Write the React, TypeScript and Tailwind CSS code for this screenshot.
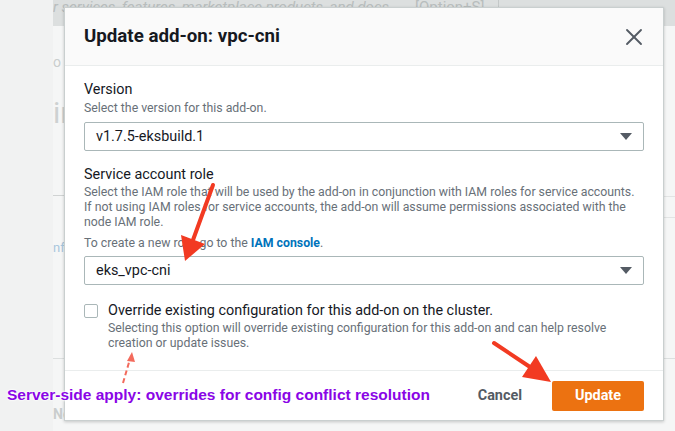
import { X } from "lucide-react";

const Caret = () => (
  <svg width="12" height="8" viewBox="0 0 12 8">
    <path d="M0 0 L12 0 L6 7 Z" fill="#545b64" />
  </svg>
);

const SelectBox = ({ value }: { value: string }) => (
  <div className="flex items-center justify-between h-[29px] border border-[#aab7b8] rounded-[2px] pl-[11px] pr-[11px] text-[14.4px] text-[#16191f]">
    <span>{value}</span>
    <Caret />
  </div>
);

const Arrows = () => (
  <svg
    className="absolute inset-0 pointer-events-none"
    width="675"
    height="431"
    viewBox="0 0 675 431"
  >
    {/* arrow to the role select */}
    <line x1="213" y1="185" x2="193" y2="240" stroke="#f23a22" strokeWidth="4" strokeLinecap="round" />
    <polygon points="185,261 181,235 205,244" fill="#f23a22" />
    {/* arrow to the update button */}
    <line x1="494" y1="343" x2="530" y2="367" stroke="#f23a22" strokeWidth="4" strokeLinecap="round" />
    <polygon points="551,382 522,377 536,356" fill="#f23a22" />
    {/* dashed hint arrow */}
    <line x1="123" y1="383" x2="130" y2="359" stroke="#f36a5c" strokeWidth="2" strokeDasharray="5 3" />
    <polygon points="132,352 127,361 135,362" fill="#f36a5c" />
  </svg>
);

export default function App() {
  return (
    <div className="relative w-[675px] h-[431px] overflow-hidden bg-[#f2f3f3] font-['Roboto','Liberation_Sans',sans-serif]">
      {/* faded console page behind the dialog */}
      <div className="flex h-full">
        <div className="w-[53px] bg-[#f1f2f2]" />
        <div className="flex-1 flex flex-col bg-[#f5f6f6]">
          <div className="h-[26px] bg-[#dcdfdf] flex items-start">
            <div className="h-[19px] w-[445px] flex items-start overflow-hidden text-[15px] italic leading-[14px] text-[#b8bdbd]">
              <span className="w-[362px] whitespace-nowrap">r services, features, marketplace products, and docs</span>
              <span className="not-italic">[Option+S]</span>
            </div>
            <div className="w-px h-[18px] bg-[#c4c8c8]" />
          </div>
          <div className="text-[14px] text-[#c9cdcd] mt-[26px] leading-[20px]">o</div>
          <div className="text-[30px] text-[#cdd1d1] mt-[23px] leading-[36px]">ir</div>
          <div className="h-px bg-[#d0d3d3] w-[12px] mt-[64px]" />
          <div className="text-[13px] text-[#a9c7dd] mt-[44px] leading-[16px]">nf</div>
          <div className="h-px bg-[#dcdfdf] mt-[102px]" />
          <div className="text-[14px] font-bold text-[#c9cdcd] mt-[48px] leading-[14px]">Ne</div>
        </div>
      </div>
      <div className="absolute right-0 top-[196px] w-[11px] h-px bg-[#e2e4e4]" />
      <div className="absolute right-0 top-[217px] w-[11px] h-px bg-[#e2e4e4]" />

      {/* dialog */}
      <div className="absolute left-[64px] top-[7px] w-[600px] h-[414px] flex flex-col bg-white border border-[#c9cfcf] shadow-[0_1px_3px_rgba(0,0,0,0.2)]">
        <div className="h-[58px] shrink-0 flex items-center justify-between pl-[19px] pr-[15px] bg-[#fafafa] border-b border-[#eaeded]">
          <div className="text-[18.7px] font-bold text-[#16191f]">Update add-on: vpc-cni</div>
          <X size={28} strokeWidth={1.6} color="#545b64" />
        </div>

        <div className="flex-1 px-[19px] pt-[14px]">
          <div className="text-[14.4px] leading-[20px] text-[#16191f]">Version</div>
          <div className="text-[12.3px] leading-[16px] text-[#687078]">Select the version for this add-on.</div>
          <div className="mt-[6px]">
            <SelectBox value="v1.7.5-eksbuild.1" />
          </div>

          <div className="mt-[14px] text-[14.4px] leading-[20px] text-[#16191f]">Service account role</div>
          <div className="text-[12.3px] leading-[15px] text-[#687078]">
            Select the IAM role that will be used by the add-on in conjunction with IAM roles for service accounts.
            <br />
            If not using IAM roles for service accounts, the add-on will assume permissions associated with the
            <br />
            node IAM role.
          </div>
          <div className="mt-[5px] text-[12.3px] leading-[16px] text-[#687078]">
            To create a new role, go to the{" "}
            <span className="font-bold text-[#0073bb]">IAM console</span>.
          </div>
          <div className="mt-[5px]">
            <SelectBox value="eks_vpc-cni" />
          </div>

          <div className="mt-[16px] flex items-start gap-[10px]">
            <div className="mt-[3px] w-[14px] h-[14px] shrink-0 border border-[#aab7b8] rounded-[2px] bg-white" />
            <div>
              <div className="text-[14.4px] leading-[20px] text-[#16191f]">
                Override existing configuration for this add-on on the cluster.
              </div>
              <div className="text-[12.3px] leading-[15px] text-[#687078]">
                Selecting this option will override existing configuration for this add-on and can help resolve
                <br />
                creation or update issues.
              </div>
            </div>
          </div>
        </div>

        <div className="h-[50px] shrink-0 flex items-center justify-end gap-[14px] px-[19px] border-t border-[#eaeded]">
          <button className="px-[16px] text-[14.4px] font-bold text-[#545b64]">Cancel</button>
          <button className="w-[92px] h-[30px] rounded-[2px] bg-[#ec7211] text-[14.4px] font-bold text-white">
            Update
          </button>
        </div>
      </div>

      <Arrows />

      <div className="absolute left-[7px] top-[383px] whitespace-nowrap font-['Liberation_Sans',Arial,sans-serif] text-[15.5px] font-bold text-[#8a05e6] [text-shadow:0_0_2px_#fff,0_0_2px_#fff,0_0_3px_#fff]">
        Server-side apply: overrides for config conflict resolution
      </div>
    </div>
  );
}
